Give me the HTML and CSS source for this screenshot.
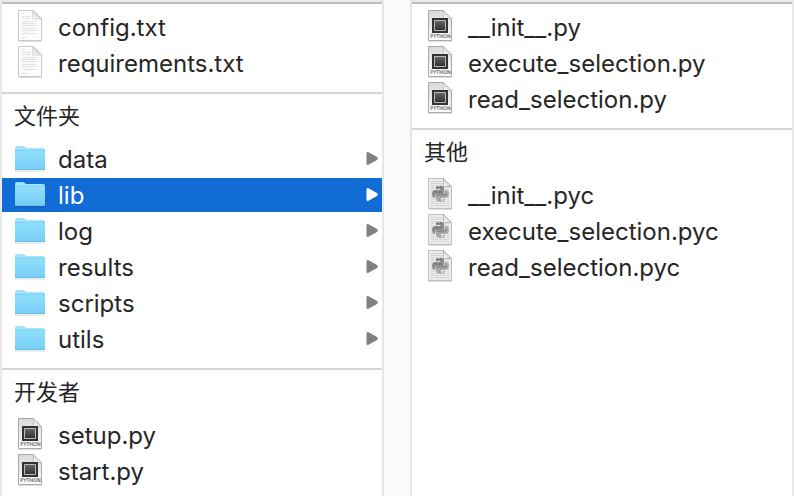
FILE: index.html
```html
<!DOCTYPE html>
<html lang="zh-CN">
<head>
    <meta charset="UTF-8">
    <meta name="viewport" content="width=device-width, initial-scale=1.0">
    <title>lib</title>
    <link rel="stylesheet" href="styles.css">
</head>
<body>
    <!-- Shared icons -->
    <svg class="sprite" aria-hidden="true">
        <defs>
            <linearGradient id="folderFill" x1="0" y1="0" x2="0" y2="1">
                <stop offset="0" stop-color="#90e0fd"/>
                <stop offset="1" stop-color="#76cdf5"/>
            </linearGradient>
            <linearGradient id="pageFill" x1="0" y1="0" x2="0" y2="1">
                <stop offset="0" stop-color="#d9d9d9"/>
                <stop offset="1" stop-color="#fdfdfd"/>
            </linearGradient>
            <linearGradient id="foldFill" x1="0" y1="1" x2="1" y2="0">
                <stop offset="0" stop-color="#ffffff"/>
                <stop offset="1" stop-color="#b5b5b5"/>
            </linearGradient>
            <linearGradient id="chipFill" x1="0" y1="0" x2="0" y2="1">
                <stop offset="0" stop-color="#666666"/>
                <stop offset="1" stop-color="#303030"/>
            </linearGradient>
        </defs>
        <symbol id="icon-text" viewBox="0 0 32 34">
            <path d="M4.5 31.4h23" stroke="#000" stroke-opacity=".15"/>
            <path d="M4.5.5h15l8 8v22h-23z" fill="#fcfcfc" stroke="#c9c9c9"/>
            <path d="M18.5.5v8.5h9z" fill="url(#foldFill)" stroke="#d0d0d0" stroke-width=".7"/>
            <path d="M8 3.5h4M8 6.500h9M8 8.500h8M8 11.500h15M8 13.5h14M8 15.5h15M8 18.500h14M8 20.500h15M8 23.500h14M8 27.5h5" stroke="#dedede" stroke-dasharray="3 .5 5 .5"/>
        </symbol>
        <symbol id="icon-python" viewBox="0 0 32 34">
            <path d="M4.5 31.4h23" stroke="#000" stroke-opacity=".15"/>
            <path d="M4.5.5h15l8 8v22h-23z" fill="url(#pageFill)" stroke="#aaaaaa"/>
            <path d="M19.5.5v8h8z" fill="url(#foldFill)" stroke="#b5b5b5" stroke-width=".7"/>
            <path d="M8 8h16v15H8z" fill="#333"/>
            <path d="M10.5 10.5h11v10h-11z" fill="url(#chipFill)" stroke="#bbbbbb"/>
            <text x="16.5" y="28" text-anchor="middle" class="icon-label">PYTHON</text>
        </symbol>
        <symbol id="icon-compiled" viewBox="0 0 32 34">
            <path d="M4.5 31.4h23" stroke="#000" stroke-opacity=".15"/>
            <path d="M4.5.5h15l8 8v22h-23z" fill="#ebebeb" stroke="#bfbfbf"/>
            <path d="M7 3.5h11M7 5.5h11M7 7.5h11M7 9.5h18M7 11.5h18M7 13.5h18M7 15.5h18M7 17.5h18M7 19.5h18M7 21.5h18M7 23.5h18M7 25.5h18M7 27.5h18" stroke="#d2d2d2" stroke-dasharray="3 1"/>
            <path d="M19.5.5v8h8z" fill="url(#foldFill)" stroke="#a5a5a5" stroke-width=".7"/>
            <path d="M12 10c0-2 8-2 8 0v4c0 2-1 2.500-3 2.500h-4c-2 0-2 1-2 3.500-4 0-4-8 0-8h5v-1h-4z" fill="#8d8d8d"/>
            <path d="M21 12c5-1 5 7 1 8h-5v1h4c0 4-8 4-9 0v-3c0-2 1-2 3-2h3c2 0 3-1 3-4z" fill="#a9a9a9"/>
            <path d="M12 9h8" stroke="#5c5c5c" stroke-dasharray="3 1"/>
            <path d="M9 14c3-1 7 1 9 0M12 18c3-2 8 0 11-2" stroke="#777" fill="none"/>
            <circle cx="18" cy="22" r="1" fill="#f2f2f2"/>
        </symbol>
        <symbol id="icon-folder" viewBox="0 0 32 34">
            <path d="M1 29h30" stroke="#000" stroke-opacity=".15"/>
            <path d="M1 6q0-2 2-2h6q1 0 2 1l1 1h17q2 0 2 2v19q0 1-1 1H2q-1 0-1-1z" fill="#9be2fb"/>
            <path d="M1 9h30v18H1z" fill="url(#folderFill)"/>
            <path d="M1 8.500h30" stroke="#7fd0f0"/>
            <path d="M1 27.500h30" stroke="#6bbfe3"/>
        </symbol>
        <symbol id="icon-arrow" viewBox="0 0 12 14">
            <path d="M1 1v11q0 1 1 .5l9-5q1-1 0-2L2 .5Q1 0 1 1z" fill="currentColor" stroke="currentColor"/>
        </symbol>
    </svg>

    <main class="browser">
        <section class="column" aria-label="项目">
            <div class="group">
                <ul class="files">
                    <li><button class="file"><svg class="icon"><use href="#icon-text"/></svg><span class="name">config.txt</span></button></li>
                    <li><button class="file"><svg class="icon"><use href="#icon-text"/></svg><span class="name">requirements.txt</span></button></li>
                </ul>
            </div>
            <div class="group">
                <h2 class="group-title">文件夹</h2>
                <ul class="files">
                    <li><button class="file"><svg class="icon"><use href="#icon-folder"/></svg><span class="name">data</span><svg class="arrow"><use href="#icon-arrow"/></svg></button></li>
                    <li><button class="file selected" aria-pressed="true"><svg class="icon"><use href="#icon-folder"/></svg><span class="name">lib</span><svg class="arrow"><use href="#icon-arrow"/></svg></button></li>
                    <li><button class="file"><svg class="icon"><use href="#icon-folder"/></svg><span class="name">log</span><svg class="arrow"><use href="#icon-arrow"/></svg></button></li>
                    <li><button class="file"><svg class="icon"><use href="#icon-folder"/></svg><span class="name">results</span><svg class="arrow"><use href="#icon-arrow"/></svg></button></li>
                    <li><button class="file"><svg class="icon"><use href="#icon-folder"/></svg><span class="name">scripts</span><svg class="arrow"><use href="#icon-arrow"/></svg></button></li>
                    <li><button class="file"><svg class="icon"><use href="#icon-folder"/></svg><span class="name">utils</span><svg class="arrow"><use href="#icon-arrow"/></svg></button></li>
                </ul>
            </div>
            <div class="group">
                <h2 class="group-title">开发者</h2>
                <ul class="files">
                    <li><button class="file"><svg class="icon"><use href="#icon-python"/></svg><span class="name">setup.py</span></button></li>
                    <li><button class="file"><svg class="icon"><use href="#icon-python"/></svg><span class="name">start.py</span></button></li>
                </ul>
            </div>
        </section>

        <div class="gutter"></div>

        <section class="column" aria-label="lib">
            <div class="group">
                <ul class="files">
                    <li><button class="file"><svg class="icon"><use href="#icon-python"/></svg><span class="name">__init__.py</span></button></li>
                    <li><button class="file"><svg class="icon"><use href="#icon-python"/></svg><span class="name">execute_selection.py</span></button></li>
                    <li><button class="file"><svg class="icon"><use href="#icon-python"/></svg><span class="name">read_selection.py</span></button></li>
                </ul>
            </div>
            <div class="group">
                <h2 class="group-title">其他</h2>
                <ul class="files">
                    <li><button class="file"><svg class="icon"><use href="#icon-compiled"/></svg><span class="name">__init__.pyc</span></button></li>
                    <li><button class="file"><svg class="icon"><use href="#icon-compiled"/></svg><span class="name">execute_selection.pyc</span></button></li>
                    <li><button class="file"><svg class="icon"><use href="#icon-compiled"/></svg><span class="name">read_selection.pyc</span></button></li>
                </ul>
            </div>
        </section>
    </main>
</body>
</html>
```
FILE: styles.css
```css
* {
    margin: 0;
    padding: 0;
    box-sizing: border-box;
}

body {
    font-family: Inter, "Noto Sans CJK SC", sans-serif;
    font-size: 24px;
    color: #262626;
    background: #eeeeee;
}

.sprite {
    position: absolute;
    width: 0;
    height: 0;
    overflow: visible;
}

.icon-label {
    font-family: "DejaVu Sans", sans-serif;
    font-size: 5px;
    fill: #333;
}

.browser {
    display: flex;
    min-height: 100vh;
    padding: 2px 2px 0;
    background: #e9e9e9;
}

/* Columns */
.column {
    flex: 1;
    min-width: 0;
    background: white;
    border-top: 2px solid #bdbdbd;
}

.gutter {
    width: 30px;
    margin-top: -2px;
    background: #fafafa;
    border-left: 2px solid #e6e6e6;
    border-right: 2px solid #e6e6e6;
}

.group {
    padding-bottom: 12px;
    border-bottom: 2px solid #d4d4d4;
}

.group:first-child {
    padding-top: 6px;
}

.group:last-child {
    padding-bottom: 8px;
    border-bottom: none;
}

.group-title {
    height: 48px;
    padding-left: 12px;
    font-size: 22px;
    font-weight: normal;
    line-height: 44px;
}

/* File rows */
.files {
    display: flex;
    flex-direction: column;
    gap: 2px;
    list-style: none;
}

.file {
    display: flex;
    align-items: center;
    gap: 12px;
    width: 100%;
    height: 34px;
    padding: 0 4px 0 12px;
    border: none;
    background: none;
    color: inherit;
    font: inherit;
    text-align: left;
}

.icon {
    flex: none;
    width: 32px;
    height: 34px;
}

.name {
    flex: 1;
    padding-top: 2px;
    line-height: 32px;
    white-space: nowrap;
}

.arrow {
    width: 12px;
    height: 14px;
    color: #808080;
}

.file.selected {
    background: #116cd6;
    color: white;
}

.file.selected .arrow {
    color: white;
}
```
